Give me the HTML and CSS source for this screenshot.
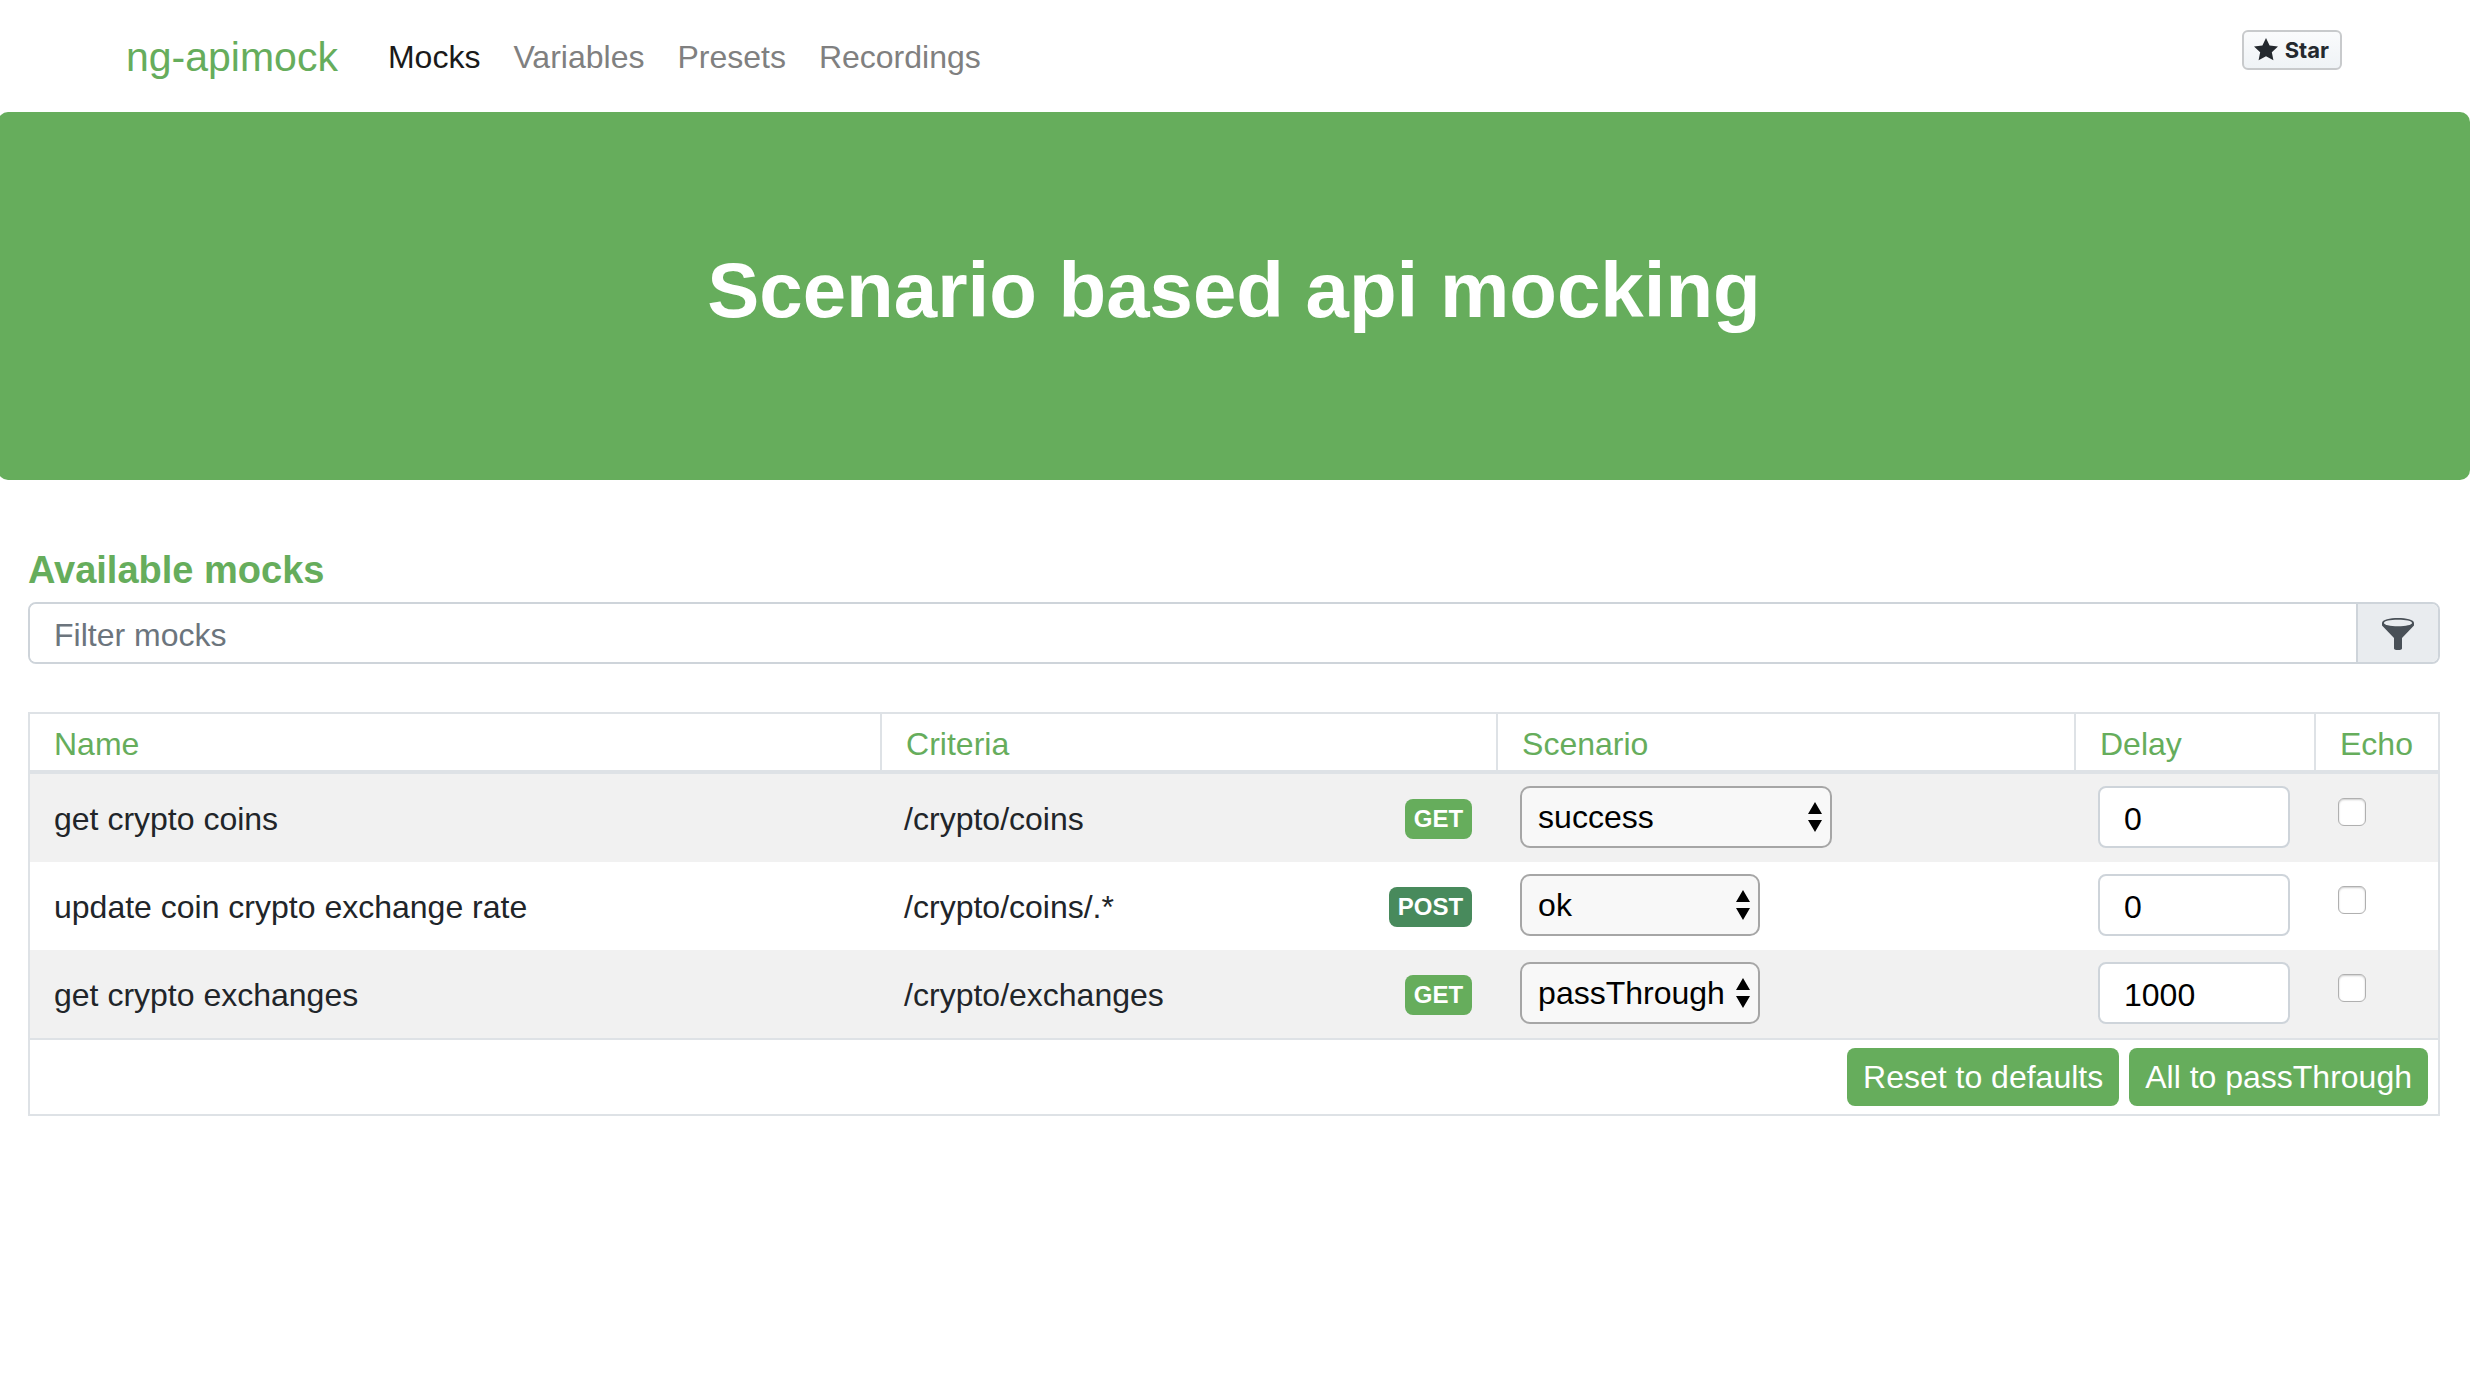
FILE: index.html
```html
<!DOCTYPE html>
<html lang="en">
<head>
<meta charset="utf-8">
<meta name="viewport" content="width=device-width, initial-scale=1">
<title>ng-apimock</title>
<link rel="stylesheet" href="styles.css">
</head>
<body>
<header class="navbar">
  <a class="brand" href="#">ng-apimock</a>
  <nav class="nav">
    <a class="nav-link active" href="#mocks">Mocks</a>
    <a class="nav-link" href="#variables">Variables</a>
    <a class="nav-link" href="#presets">Presets</a>
    <a class="nav-link" href="#recordings">Recordings</a>
  </nav>
  <a class="star" href="#star">
    <svg class="star-icon" viewBox="0 0 14 16" aria-hidden="true"><path d="M14 6l-4.900-.64L7 1 4.900 5.360 0 6l3.600 3.260L2.670 14 7 11.670 11.330 14l-.93-4.740z"/></svg>
    <span>Star</span>
  </a>
</header>

<section class="hero">
  <h1 class="hero-title">Scenario based api mocking</h1>
</section>

<main class="content" id="mocks">
  <h2 class="title">Available mocks</h2>
  <div class="filter">
    <input class="filter-input" type="text" placeholder="Filter mocks" aria-label="Filter mocks">
    <span class="filter-addon">
      <svg class="funnel" viewBox="0 0 32 32" aria-hidden="true"><path fill-rule="evenodd" d="M0 5C0 1.500 8 0 16 0s16 1.500 16 5v2.500L20 20v10.500c0 1-2 1.500-4 1.500s-4-.5-4-1.500V20L0 7.500zM2 5c0 2 6 3.200 14 3.200S30 7 30 5s-6-3.200-14-3.200S2 3 2 5z"/></svg>
    </span>
  </div>

  <table class="mocks">
    <colgroup>
      <col><col class="col-criteria"><col class="col-scenario"><col class="col-delay"><col class="col-echo">
    </colgroup>
    <thead>
      <tr><th scope="col">Name</th><th scope="col">Criteria</th><th scope="col">Scenario</th><th scope="col">Delay</th><th scope="col">Echo</th></tr>
    </thead>
    <tbody>
      <tr>
        <td>get crypto coins</td>
        <td><div class="criteria"><span>/crypto/coins</span><span class="badge">GET</span></div></td>
        <td class="control">
          <div class="select">
            <select class="select-box wide" aria-label="Scenario for get crypto coins"><option>success</option><option>passThrough</option></select>
            <svg class="arrows" viewBox="0 0 14 30" aria-hidden="true"><path d="M7 0l7 12H0zM0 18h14L7 30z"/></svg>
          </div>
        </td>
        <td class="control"><input class="delay" type="text" value="0" aria-label="Delay for get crypto coins"></td>
        <td class="control"><input class="echo" type="checkbox" aria-label="Echo get crypto coins"></td>
      </tr>
      <tr>
        <td>update coin crypto exchange rate</td>
        <td><div class="criteria"><span>/crypto/coins/.*</span><span class="badge post">POST</span></div></td>
        <td class="control">
          <div class="select">
            <select class="select-box" aria-label="Scenario for update coin crypto exchange rate"><option>ok</option><option>passThrough</option></select>
            <svg class="arrows" viewBox="0 0 14 30" aria-hidden="true"><path d="M7 0l7 12H0zM0 18h14L7 30z"/></svg>
          </div>
        </td>
        <td class="control"><input class="delay" type="text" value="0" aria-label="Delay for update coin crypto exchange rate"></td>
        <td class="control"><input class="echo" type="checkbox" aria-label="Echo update coin crypto exchange rate"></td>
      </tr>
      <tr>
        <td>get crypto exchanges</td>
        <td><div class="criteria"><span>/crypto/exchanges</span><span class="badge">GET</span></div></td>
        <td class="control">
          <div class="select">
            <select class="select-box" aria-label="Scenario for get crypto exchanges"><option>passThrough</option></select>
            <svg class="arrows" viewBox="0 0 14 30" aria-hidden="true"><path d="M7 0l7 12H0zM0 18h14L7 30z"/></svg>
          </div>
        </td>
        <td class="control"><input class="delay" type="text" value="1000" aria-label="Delay for get crypto exchanges"></td>
        <td class="control"><input class="echo" type="checkbox" aria-label="Echo get crypto exchanges"></td>
      </tr>
    </tbody>
    <tfoot>
      <tr>
        <td colspan="5">
          <div class="actions">
            <button class="button" type="button">Reset to defaults</button>
            <button class="button" type="button">All to passThrough</button>
          </div>
        </td>
      </tr>
    </tfoot>
  </table>
</main>
</body>
</html>
```
FILE: styles.css
```css
:root {
  --green: #66ad5c;
  --line: #dee2e6;
  --field-line: #ced4da;
}

*,
*::before,
*::after {
  box-sizing: border-box;
}

body {
  margin: 0;
  overflow-x: hidden;
  background: #fff;
  color: #212529;
  font: 32px/48px "Liberation Sans", Arial, sans-serif;
}

a {
  text-decoration: none;
}

input,
select,
button {
  margin: 0;
  font: inherit;
}

/* Top bar */
.navbar {
  display: flex;
  align-items: center;
  height: 112px;
  padding: 2px 128px 0 126px;
}

.brand {
  margin-right: 50px;
  color: var(--green);
  font-size: 41px;
}

.nav {
  display: flex;
  gap: 33px;
}

.nav-link {
  color: #808080;
}

.nav-link.active {
  color: #1a1a1a;
}

.star {
  display: flex;
  align-items: center;
  align-self: flex-start;
  gap: 7px;
  height: 40px;
  margin: 28px 0 0 auto;
  padding: 0 11px 0 10px;
  border: 2px solid #c8cacc;
  border-radius: 6px;
  background: linear-gradient(#fafbfc, #eff3f6);
  color: #24292e;
  font: 700 22px/36px Inter, sans-serif;
}

.star-icon {
  width: 24px;
  height: 28px;
  fill: currentColor;
}

/* Banner */
.hero {
  margin-left: -2px;
  padding: 130px 32px 142px;
  border-radius: 10px;
  background: var(--green);
  color: #fff;
  text-align: center;
}

.hero-title {
  margin: 0;
  font-size: 78px;
  font-weight: 700;
  line-height: 96px;
}

/* Mocks */
.content {
  padding: 66px 30px 0 28px;
}

.title {
  margin: 0 0 8px;
  color: var(--green);
  font-size: 38px;
  font-weight: 700;
  line-height: 48px;
}

.filter {
  display: flex;
  height: 62px;
  margin-bottom: 48px;
  border: 2px solid var(--field-line);
  border-radius: 8px;
  overflow: hidden;
}

.filter-input {
  flex: 1;
  min-width: 0;
  padding: 4px 24px 0;
  border: 0;
  outline: 0;
  background: #fff;
}

.filter-input::placeholder {
  color: #6c757d;
  opacity: 1;
}

.filter-addon {
  display: flex;
  align-items: center;
  padding: 2px 24px 0;
  border-left: 2px solid var(--field-line);
  background: #e9ecef;
}

.funnel {
  width: 32px;
  height: 32px;
  fill: #495057;
}

.mocks {
  width: 100%;
  table-layout: fixed;
  border: 2px solid var(--line);
  border-spacing: 0;
}

.col-criteria {
  width: 616px;
}

.col-scenario {
  width: 24%;
}

.col-delay {
  width: 240px;
}

.col-echo {
  width: 124px;
}

.mocks th {
  height: 60px;
  padding: 6px 24px 2px;
  border-bottom: 4px solid var(--line);
  color: var(--green);
  font-weight: 400;
  text-align: left;
}

.mocks th + th {
  border-left: 2px solid var(--line);
}

.mocks tbody td {
  height: 88px;
  padding: 14px 24px 12px;
}

.mocks tbody .control {
  padding: 12px 24px 14px;
  vertical-align: top;
}

.mocks tbody tr:nth-child(odd) {
  background: #f1f1f1;
}

.criteria {
  display: flex;
  align-items: center;
  justify-content: space-between;
}

.badge {
  padding: 0 9px;
  border-radius: 8px;
  background: var(--green);
  color: #fff;
  font-size: 24px;
  font-weight: 700;
  line-height: 40px;
}

.badge.post {
  background: #488a5c;
}

.select {
  display: inline-grid;
  align-items: center;
  vertical-align: top;
}

.select-box {
  grid-area: 1 / 1;
  width: 240px;
  height: 62px;
  padding: 0 16px;
  border: 2px solid #a6a6a6;
  border-radius: 10px;
  appearance: none;
  background: #f8f8f8;
  color: #000;
}

.select-box.wide {
  width: 312px;
}

.arrows {
  grid-area: 1 / 1;
  justify-self: end;
  width: 14px;
  height: 30px;
  margin-right: 10px;
  pointer-events: none;
}

.delay {
  display: block;
  width: 100%;
  height: 62px;
  padding: 4px 24px 0;
  border: 2px solid var(--field-line);
  border-radius: 8px;
  background: #fff;
  color: #000;
}

.echo {
  display: block;
  width: 28px;
  height: 28px;
  margin-top: 12px;
  border: 1px solid #b0b0b0;
  border-radius: 6px;
  appearance: none;
  background: #fff;
  box-shadow: inset 0 1px 2px #ccc;
}

.echo:checked {
  background: var(--green);
}

.mocks tfoot td {
  padding: 8px 10px;
  border-top: 2px solid var(--line);
}

.actions {
  display: flex;
  justify-content: flex-end;
  gap: 10px;
}

.button {
  height: 58px;
  padding: 0 16px;
  border: 0;
  border-radius: 8px;
  background: var(--green);
  color: #fff;
}
```
